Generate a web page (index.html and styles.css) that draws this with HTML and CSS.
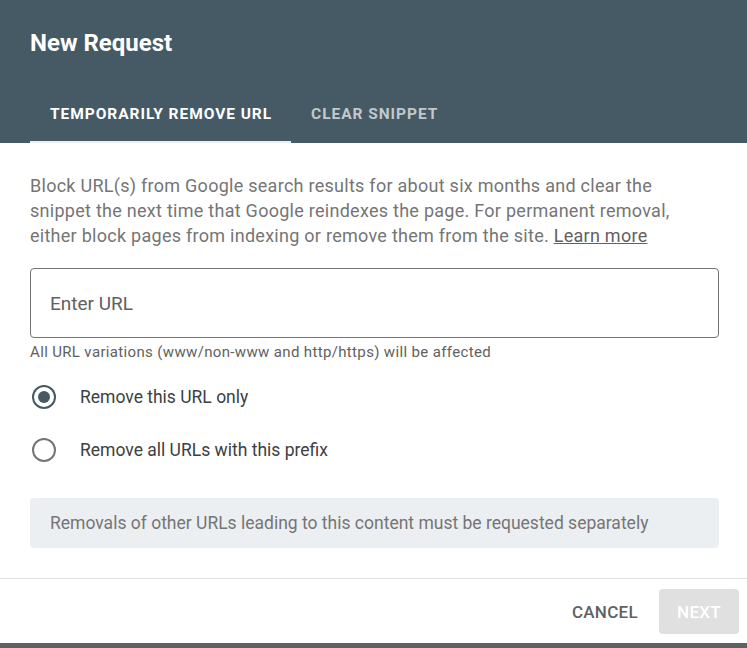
FILE: index.html
```html
<!DOCTYPE html>
<html lang="en">
<head>
<meta charset="utf-8">
<title>New Request</title>
<link rel="stylesheet" href="styles.css">
</head>
<body>
<div class="dialog">
  <header class="dialog-header">
    <h1 class="dialog-title">New Request</h1>
    <nav class="tabs">
      <div class="tab tab-active">TEMPORARILY REMOVE URL</div>
      <div class="tab">CLEAR SNIPPET</div>
    </nav>
  </header>
  <main class="dialog-body">
    <p class="intro">Block URL(s) from Google search results for about six months and clear the snippet the next time that Google reindexes the page. For permanent removal, either block pages from indexing or remove them from the site. <a class="link" href="#">Learn more</a></p>
    <div class="field">
      <div class="field-box"><span class="placeholder">Enter URL</span></div>
      <div class="helper">All URL variations (www/non-www and http/https) will be affected</div>
    </div>
    <div class="radios">
      <div class="radio-row">
        <span class="radio radio-checked"><span class="radio-dot"></span></span>
        <span class="radio-label">Remove this URL only</span>
      </div>
      <div class="radio-row">
        <span class="radio"></span>
        <span class="radio-label">Remove all URLs with this prefix</span>
      </div>
    </div>
    <div class="notice">Removals of other URLs leading to this content must be requested separately</div>
  </main>
  <footer class="dialog-footer">
    <button class="btn btn-text">CANCEL</button>
    <button class="btn btn-disabled">NEXT</button>
  </footer>
</div>
<div class="bottom-strip"></div>
</body>
</html>
```
FILE: styles.css
```css
* { box-sizing: border-box; }
html, body { margin: 0; padding: 0; }
body {
  width: 747px;
  height: 648px;
  overflow: hidden;
  background: #ffffff;
  font-family: Roboto, "Liberation Sans", Arial, sans-serif;
  display: flex;
  flex-direction: column;
}
.dialog {
  flex: 1;
  display: flex;
  flex-direction: column;
  background: #fff;
}
.dialog-header {
  background: #455a64;
  height: 143px;
  padding: 0 30px;
  display: flex;
  flex-direction: column;
}
.dialog-title {
  margin: 0;
  padding-top: 29px;
  font-size: 24px;
  line-height: 28px;
  font-weight: 700;
  color: #ffffff;
  height: 91px;
}
.tabs {
  display: flex;
  height: 52px;
}
.tab {
  padding: 0 19px 4px 20px;
  font-size: 15.5px;
  font-weight: 700;
  letter-spacing: 0.95px;
  color: #c2c8cc;
  display: flex;
  align-items: center;
  height: 52px;
  border-bottom: 2px solid transparent;
}
.tab-active {
  color: #ffffff;
  border-bottom-color: #eceff1;
}
.dialog-body {
  padding: 30px 28px 0 30px;
  flex: 1;
}
.intro {
  margin: 0;
  max-width: 670px;
  font-size: 18px;
  letter-spacing: 0.27px;
  line-height: 25px;
  color: #757575;
}
.link {
  color: #616161;
  text-decoration: underline;
}
.field {
  margin-top: 20px;
}
.field-box {
  height: 70px;
  border: 1px solid #757575;
  border-radius: 4px;
  padding: 0 19px;
  display: flex;
  align-items: center;
}
.placeholder {
  font-size: 19px;
  color: #616161;
}
.helper {
  margin-top: 5px;
  font-size: 15px;
  letter-spacing: 0.35px;
  line-height: 18px;
  color: #616161;
}
.radios {
  margin-top: 24px;
  display: flex;
  flex-direction: column;
  gap: 29px;
}
.radio-row {
  display: flex;
  align-items: center;
  height: 24px;
}
.radio {
  width: 24px;
  height: 24px;
  border: 2px solid #757575;
  border-radius: 50%;
  margin-left: 2px;
  display: flex;
  align-items: center;
  justify-content: center;
}
.radio-checked { border-color: #455a64; }
.radio-dot {
  width: 12px;
  height: 12px;
  border-radius: 50%;
  background: #455a64;
}
.radio-label {
  margin-left: 24px;
  font-size: 17.5px;
  color: #3c4043;
}
.notice {
  margin-top: 36px;
  height: 50px;
  background: #eceff1;
  border-radius: 4px;
  padding: 0 20px;
  display: flex;
  align-items: center;
  font-size: 17.5px;
  color: #757575;
}
.dialog-footer {
  height: 65px;
  border-top: 1px solid #e0e0e0;
  display: flex;
  justify-content: flex-end;
  align-items: flex-start;
  padding: 10px 8px 0 0;
  gap: 12px;
}
.btn {
  font-family: Roboto, "Liberation Sans", Arial, sans-serif;
  font-size: 17px;
  font-weight: 500;
  letter-spacing: 0.3px;
  height: 45px;
  border: none;
  border-radius: 4px;
  padding: 0 9px;
  background: transparent;
}
.btn-text { color: #616161; }
.btn-disabled {
  background: #e0e0e0;
  color: #ffffff;
  width: 80px;
}
.bottom-strip {
  height: 5px;
  background: #606164;
}
```
